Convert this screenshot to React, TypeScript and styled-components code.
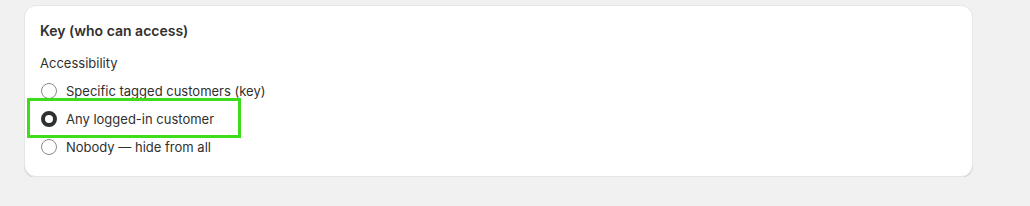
import React, { useState } from "react";
import styled, { createGlobalStyle } from "styled-components";

const Global = createGlobalStyle`
  html, body { margin: 0; padding: 0; background: #f1f1f1; }
  body { font-family: Inter, "Noto Sans", sans-serif; color: #303030; -webkit-font-smoothing: antialiased; }
`;

const Page = styled.div`
  padding: 5px 0 0 24px;
`;

const Card = styled.section`
  box-sizing: border-box;
  width: 949px;
  background: #ffffff;
  border-radius: 12px;
  border: 1px solid #e6e6e6;
  box-shadow: 0 1px 0 0 #d4d4d4;
  padding: 15px;
  display: flex;
  flex-direction: column;
`;

const Title = styled.h2`
  margin: 0;
  font-size: 14px;
  line-height: 20px;
  font-weight: 600;
  color: #303030;
`;

const Legend = styled.div`
  margin-top: 12px;
  font-size: 13px;
  line-height: 20px;
  color: #303030;
`;

const Options = styled.div`
  margin-top: 4px;
  display: flex;
  flex-direction: column;
`;

const Row = styled.label`
  position: relative;
  display: flex;
  align-items: center;
  gap: 9px;
  height: 28px;
  font-size: 13px;
  line-height: 20px;
  cursor: pointer;
  align-self: flex-start;
`;

const Dot = styled.span<{ $on: boolean }>`
  box-sizing: border-box;
  width: 16px;
  height: 16px;
  margin-left: 1px;
  border-radius: 50%;
  background: #fff;
  border: ${(p) => (p.$on ? "4.5px solid #303030" : "1px solid #8a8a8a")};
  flex: none;
`;

const Highlight = styled.span`
  position: absolute;
  left: -13px;
  top: -7px;
  width: 214px;
  height: 40px;
  box-sizing: border-box;
  border: 3px solid #3fdc1c;
  pointer-events: none;
`;

const options = [
  "Specific tagged customers (key)",
  "Any logged-in customer",
  "Nobody — hide from all",
];

export default function App() {
  const [sel, setSel] = useState(1);
  return (
    <>
      <Global />
      <Page>
        <Card>
          <Title>Key (who can access)</Title>
          <Legend>Accessibility</Legend>
          <Options>
            {options.map((o, i) => (
              <Row key={o} onClick={() => setSel(i)}>
                <Dot $on={sel === i} />
                <span>{o}</span>
                {i === 1 && <Highlight />}
              </Row>
            ))}
          </Options>
        </Card>
      </Page>
    </>
  );
}
